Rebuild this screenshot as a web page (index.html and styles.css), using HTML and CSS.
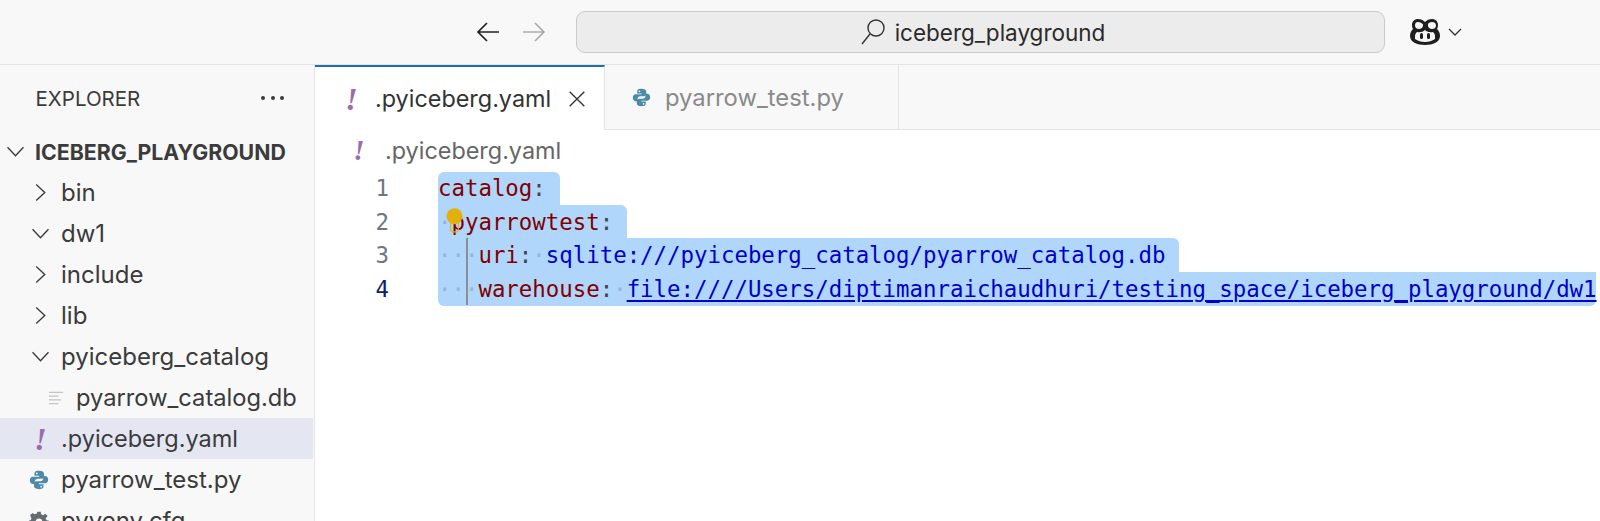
FILE: index.html
```html
<!DOCTYPE html>
<html lang="en">
<head>
<meta charset="utf-8">
<title>iceberg_playground</title>
<link rel="stylesheet" href="styles.css">
</head>
<body>
<svg class="defs" width="0" height="0" aria-hidden="true">
  <symbol id="py" viewBox="0 0 24 24">
    <path fill="#4d8aa8" d="M11.8 1C7 1 6.6 3 6.6 4.400V7h5.600v1H4.600C2.600 8 1 9.600 1 12.200s1.500 4.600 3.600 4.600H7v-3c0-1.900 1.600-3.400 3.500-3.400h4.700c1.500 0 2.800-1.300 2.800-2.800V4.400C18 2.500 16 1 11.800 1zM9.400 3a1.100 1.100 0 1 1 0 2.200 1.100 1.100 0 0 1 0-2.200z"/>
    <path fill="#4d8aa8" d="M12.200 23c4.800 0 5.200-2 5.200-3.400V17h-5.600v-1h7.600c2 0 3.600-1.600 3.600-4.200s-1.500-4.600-3.600-4.600H17v3c0 1.900-1.600 3.400-3.500 3.400H8.800C7.300 13.600 6 14.900 6 16.400v3.200C6 21.500 8 23 12.200 23zm2.400-2a1.100 1.100 0 1 1 0-2.200 1.100 1.100 0 0 1 0 2.200z"/>
  </symbol>
</svg>
<header class="titlebar">
  <div class="nav">
    <svg class="arrow" viewBox="0 0 26 24"><path d="M24 12H3M12 3l-9 9 9 9"/></svg>
    <svg class="arrow dim" viewBox="0 0 26 24"><path d="M2 12h21M14 3l9 9-9 9"/></svg>
  </div>
  <div class="search">
    <svg class="lens" viewBox="0 0 26 28"><circle cx="16" cy="10" r="8"/><path d="M10 16 2 26"/></svg>
    <span>iceberg_playground</span>
  </div>
  <div class="copilot">
    <svg class="pilot" viewBox="0 0 32 28">
      <path fill="#1f1f1f" d="M9 1c-3 0-6 2-6 6 0 2 .5 3 1 4-2 2-3 4-3 7 0 6 7 9 15 9s15-3 15-9c0-3-1-5-3-7 .5-1 1-2 1-4 0-4-3-6-6-6-3 0-5 1-7 3-2-2-4-3-7-3z"/>
      <path fill="#f7f7f7" d="M9 4c-2 0-3 1-3 3.500 0 2.500 2 3.500 4 3.500s4-1.500 4-3.500V6.500C13 5 11 4 9 4zm14 0c-2 0-4 1-4 2.500V7.500c0 2 2 3.500 4 3.500s4-1 4-3.500C27 5 25 4 23 4zM16 12c-2 2-5 2.500-8 2-1 1-2 2-2 4v3c3 2 6 3 10 3s7-1 10-3v-3c0-2-1-3-2-4-3 .5-6 0-8-2z"/>
      <rect x="11" y="15" width="3" height="6" rx="1.500" fill="#1f1f1f"/>
      <rect x="18" y="15" width="3" height="6" rx="1.500" fill="#1f1f1f"/>
    </svg>
    <svg class="caret" viewBox="0 0 14 8"><path d="M1 1l6 6 6-6"/></svg>
  </div>
</header>
<div class="workbench">
  <aside class="sidebar">
    <div class="side-head">
      <span class="side-title">EXPLORER</span>
      <span class="dots"><i></i><i></i><i></i></span>
    </div>
    <ul class="tree">
      <li class="row root"><svg class="chev" viewBox="0 0 16 16"><path d="M.5 4l7.500 8 7.500-8"/></svg><span>ICEBERG_PLAYGROUND</span></li>
      <li class="row lvl1"><svg class="chev" viewBox="0 0 16 16"><path d="M4 .5l8 7.500-8 7.500"/></svg><span>bin</span></li>
      <li class="row lvl1"><svg class="chev" viewBox="0 0 16 16"><path d="M.5 4l7.500 8 7.500-8"/></svg><span>dw1</span></li>
      <li class="row lvl1"><svg class="chev" viewBox="0 0 16 16"><path d="M4 .5l8 7.500-8 7.500"/></svg><span>include</span></li>
      <li class="row lvl1"><svg class="chev" viewBox="0 0 16 16"><path d="M4 .5l8 7.500-8 7.500"/></svg><span>lib</span></li>
      <li class="row lvl1"><svg class="chev" viewBox="0 0 16 16"><path d="M.5 4l7.500 8 7.500-8"/></svg><span>pyiceberg_catalog</span></li>
      <li class="row lvl2"><svg class="lines" viewBox="0 0 16 14"><path d="M0 1h15M0 5h10M0 9h13M0 13h10"/></svg><span>pyarrow_catalog.db</span></li>
      <li class="row lvl1 selected"><span class="bang">!</span><span>.pyiceberg.yaml</span></li>
      <li class="row lvl1"><svg class="pyicon"><use href="#py"/></svg><span>pyarrow_test.py</span></li>
      <li class="row lvl1"><svg class="gear" viewBox="0 0 24 24"><path d="M10 1h4l.6 3 2.400 1 2.600-1.700 2.800 2.800L20 8.700l1 2.300 3 .6v4l-3 .6-1 2.400 1.700 2.600-2.800 2.800-2.600-1.700-2.400 1-.6 3h-4l-.6-3-2.400-1-2.600 1.700L1.400 21.200 3 18.600 2 16.200l-3-.6v-4l3-.6 1-2.300L1.300 5.100l2.800-2.800L6.700 4l2.700-1z"/><circle cx="12" cy="13" r="4" fill="#f8f8f8"/></svg><span>pyvenv.cfg</span></li>
    </ul>
  </aside>
  <main class="editor">
    <div class="tabs">
      <div class="tab active"><span class="bang">!</span><span>.pyiceberg.yaml</span><svg class="close" viewBox="0 0 16 16"><path d="M1.500 1.500l13 13M14.500 1.500l-13 13"/></svg></div>
      <div class="tab"><svg class="pyicon small"><use href="#py"/></svg><span>pyarrow_test.py</span></div>
      <div class="tab-rest"></div>
    </div>
    <div class="crumbs"><span class="bang">!</span><span>.pyiceberg.yaml</span></div>
    <div class="code">
      <div class="sel s1"></div>
      <div class="sel s2"></div>
      <div class="sel s3"></div>
      <div class="sel s4"></div>
      <div class="guide"></div>
      <svg class="bulb" viewBox="0 0 18 27"><circle cx="9" cy="8.500" r="8.500"/><path class="base" d="M5 15v8a2 2 0 0 0 2 2h4a2 2 0 0 0 2-2v-8"/></svg>
      <div class="line"><span class="ln">1</span><span class="src"><span class="k">catalog</span><span class="p">:</span></span></div>
      <div class="line"><span class="ln">2</span><span class="src"><span class="ws">·</span><span class="k">pyarrowtest</span><span class="p">:</span></span></div>
      <div class="line"><span class="ln">3</span><span class="src"><span class="ws">···</span><span class="k">uri</span><span class="p">:</span><span class="ws">·</span><span class="v">sqlite:///pyiceberg_catalog/pyarrow_catalog.db</span></span></div>
      <div class="line cur"><span class="ln">4</span><span class="src"><span class="ws">···</span><span class="k">warehouse</span><span class="p">:</span><span class="ws">·</span><span class="v link">file:////Users/diptimanraichaudhuri/testing_space/iceberg_playground/dw1</span></span></div>
    </div>
  </main>
</div>
</body>
</html>
```
FILE: styles.css
```css
* { box-sizing: border-box; }
html, body { margin: 0; height: 100%; overflow: hidden; background: #fff; }
body { font-family: Inter, "Liberation Sans", sans-serif; color: #3b3b3b; width: 1600px; height: 521px; }
.defs { position: absolute; }
svg { display: block; flex: none; }

.titlebar { height: 65px; background: #f8f8f8; border-bottom: 1px solid #e4e4e4; display: flex; align-items: center; padding: 0 0 1px 475px; }
.nav { display: flex; gap: 20px; width: 101px; }
.arrow { width: 26px; height: 24px; fill: none; stroke: #222; stroke-width: 1.700; }
.arrow.dim { stroke: #aaa; }
.search { width: 809px; height: 42px; background: #ececec; border: 1.500px solid #c9c9c9; border-radius: 9px; display: flex; align-items: center; justify-content: center; gap: 9px; font-size: 22.500px; color: #2a2a2a; padding: 1px 0 0 4px; }
.lens { width: 26px; height: 28px; fill: none; stroke: #333; stroke-width: 1.400; }
.copilot { display: flex; align-items: center; gap: 7px; margin-left: 24px; }
.pilot { width: 32px; height: 28px; }
.caret { width: 14px; height: 8px; fill: none; stroke: #333; stroke-width: 1.300; }

.workbench { display: flex; height: 456px; }
.sidebar { width: 315px; background: #f8f8f8; border-right: 1px solid #e4e4e4; overflow: hidden; flex: none; }
.side-head { height: 66px; display: flex; align-items: center; justify-content: space-between; padding: 0 30px 0 35.500px; }
.side-title { font-size: 20.500px; color: #3b3b3b; }
.dots { display: flex; gap: 5.500px; }
.dots i { width: 4px; height: 4px; border-radius: 50%; background: #3b3b3b; }
.tree { list-style: none; margin: 0; padding: 0; }
.row { height: 41px; display: flex; align-items: center; font-size: 24px; white-space: nowrap; }
.root { padding-left: 7px; gap: 11px; font-weight: 700; font-size: 21.300px; }
.lvl1 { padding-left: 32px; }
.lvl1 > :first-child { margin-right: 12px; }
.lvl2 { padding-left: 49px; font-size: 23.700px; }
.chev { width: 17px; height: 17px; fill: none; stroke: #3b3b3b; stroke-width: 1.300; }
.lines { width: 15px; height: 14px; fill: none; stroke: #c4c4c4; stroke-width: 1.500; margin-right: 12px; }
.selected { background: #e4e6f1; margin-right: 1px; font-size: 23.500px; }
.bang { font-family: "Liberation Serif", serif; font-style: italic; font-weight: 700; font-size: 32px; color: #9b6bb0; width: 17px; text-align: center; line-height: 1; }
.pyicon { width: 20px; height: 20px; margin-left: -3px; }
.lvl1 .pyicon { margin-right: 12px; }
.gear { width: 20px; height: 20px; margin-left: -3px; fill: #636c72; }
.lvl1 .gear { margin-right: 12px; }

.editor { flex: 1; min-width: 0; background: #fff; }
.tabs { height: 65px; display: flex; background: #f8f8f8; border-bottom: 1px solid #e4e4e4; }
.tab { display: flex; align-items: center; height: 64px; font-size: 23.800px; padding: 0 0 0 27px; border-right: 1px solid #e4e4e4; color: #8a8a8a; width: 294px; }
.tab.active { width: 290px; background: #fff; color: #333; border-top: 2px solid #1c6fb5; height: 65px; margin-bottom: -1px; padding-left: 28px; font-size: 23.400px; }
.tab .bang { margin-right: 15px; }
.close { width: 18px; height: 18px; fill: none; stroke: #333; stroke-width: 1.200; margin-left: 17px; }
.pyicon.small { margin: 0 14px 0 0; width: 19px; height: 19px; }
.tab-rest { flex: 1; }

.crumbs { height: 41px; display: flex; align-items: center; padding-left: 37px; font-size: 23.400px; color: #666; gap: 19px; }
.crumbs .bang { width: 14px; font-size: 29px; }

.code { position: relative; font-family: "DejaVu Sans Mono", monospace; font-size: 22.380px; }
.line { height: 33.500px; display: flex; align-items: center; white-space: pre; position: relative; top: .400px; }
.ln { width: 74px; text-align: right; color: #6e7681; flex: none; }
.cur .ln { color: #0b216f; }
.src { margin-left: 49px; }
.k { color: #800000; }
.p { color: #444; }
.v { color: #0000c8; }
.link { text-decoration: underline; text-underline-offset: 3px; }
.ws { color: #9ab3cf; }

.sel { position: absolute; left: 123px; background: #b0d6fc; height: 34px; }
.s1 { top: .500px; width: 122px; height: 33.500px; border-radius: 6px 6px 0 0; }
.s2 { top: 33.500px; width: 189px; border-radius: 0 6px 0 0; }
.s3 { top: 67px; width: 741px; border-radius: 0 6px 0 0; }
.s4 { top: 100.500px; width: 1158px; border-radius: 0 0 6px 6px; }
.guide { position: absolute; left: 151px; top: 67px; width: 1.500px; height: 67px; background: #8a8f96; }
.bulb { position: absolute; left: 130.500px; top: 36.500px; width: 17px; height: 26px; fill: #e2b00c; z-index: 2; }
.bulb .base { fill: none; stroke: #e2b00c; stroke-width: 1.200; }
```
